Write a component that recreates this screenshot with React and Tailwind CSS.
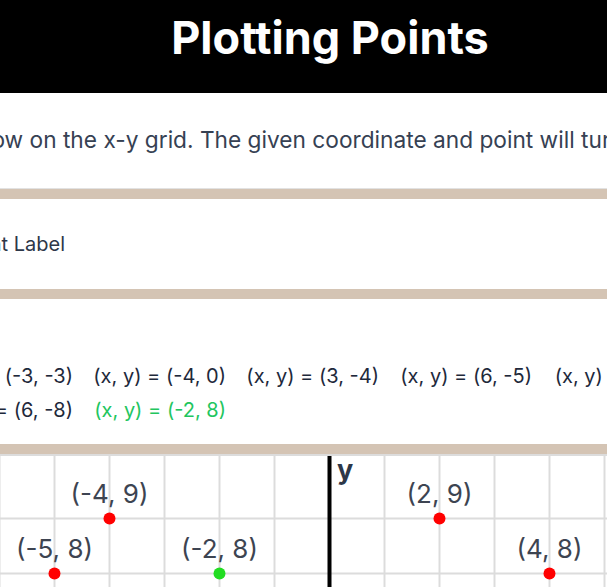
import React from "react";

const coords = [
  { x: -3, y: -3 },
  { x: -4, y: 0 },
  { x: 3, y: -4 },
  { x: 6, y: -5 },
  { x: 5, y: -7 },
  { x: 6, y: -8 },
  { x: -2, y: 8, done: true },
];

const plotted = [
  { x: -4, y: 9 },
  { x: -5, y: 8 },
  { x: -2, y: 8, done: true },
  { x: 2, y: 9 },
  { x: 4, y: 8 },
];

// grid geometry, in px inside the svg
const UNIT = 55;
const OX = 329.5;
const toX = (x) => OX + x * UNIT;
const toY = (y) => 64.5 + (9 - y) * UNIT;

function Grid() {
  const cols = [];
  for (let k = -6; k <= 6; k++) if (k !== 0) cols.push(toX(k));
  return (
    <svg width="660" height="140" className="block">
      <line x1="0" y1="1" x2="660" y2="1" stroke="#dcdcdc" strokeWidth="2" />
      {cols.map((x) => (
        <line key={x} x1={x} y1="0" x2={x} y2="140" stroke="#dcdcdc" strokeWidth="2" />
      ))}
      {[9, 8].map((y) => (
        <line key={y} x1="0" y1={toY(y)} x2="660" y2={toY(y)} stroke="#dcdcdc" strokeWidth="2" />
      ))}
      <line x1={OX} y1="2" x2={OX} y2="140" stroke="#000" strokeWidth="4" />
      <text x="337" y="25" fontSize="27" fontWeight="700" fill="#2d3748" fontFamily="Inter, sans-serif">
        y
      </text>
      {plotted.map((p) => (
        <g key={p.x + "," + p.y}>
          <text
            x={toX(p.x)}
            y={toY(p.y) - 16}
            textAnchor="middle"
            fontSize="26"
            fill="#3d4451"
            fontFamily="Inter, sans-serif"
          >
            ({p.x}, {p.y})
          </text>
          <circle cx={toX(p.x)} cy={toY(p.y)} r="6" fill={p.done ? "#22dd22" : "#ff0000"} />
        </g>
      ))}
    </svg>
  );
}

export default function App() {
  return (
    <div className="w-[607px] h-[587px] overflow-hidden bg-[#d4c4b4] font-['Inter',sans-serif]">
      <div className="w-[660px]">
        <header className="h-[93px] bg-black flex items-center justify-center pb-[18px]">
          <h1 className="text-[45px] font-bold leading-none text-white whitespace-nowrap">Plotting Points</h1>
        </header>

        <section className="h-[96px] bg-white border-b border-[#e2e2e2] flex items-center">
          <p className="ml-[-201px] whitespace-nowrap text-[22.7px] text-gray-700">
            Plot the points below on the x-y grid. The given coordinate and point will turn green when plotted correctly.
          </p>
        </section>

        <section className="mt-[10px] h-[90px] bg-white flex items-center">
          <div className="w-[65px] flex justify-end">
            <label className="flex items-center gap-2 whitespace-nowrap text-[20px] text-[#2d3748]">
              <input type="checkbox" className="w-4 h-4" />
              Show Point Label
            </label>
          </div>
        </section>

        <section className="mt-[10px] h-[145px] bg-white pt-[60px]">
          <div className="ml-[-58px] grid grid-cols-[repeat(5,131px)] gap-x-[22px] justify-items-end text-[20px] leading-[34px] whitespace-nowrap text-[#1e293b]">
            {coords.map((c, i) => (
              <span key={i} className={c.done ? "text-[#22c55e]" : ""}>
                (x, y) = ({c.x}, {c.y})
              </span>
            ))}
          </div>
        </section>

        <section className="mt-[10px] bg-white">
          <Grid />
        </section>
      </div>
    </div>
  );
}
